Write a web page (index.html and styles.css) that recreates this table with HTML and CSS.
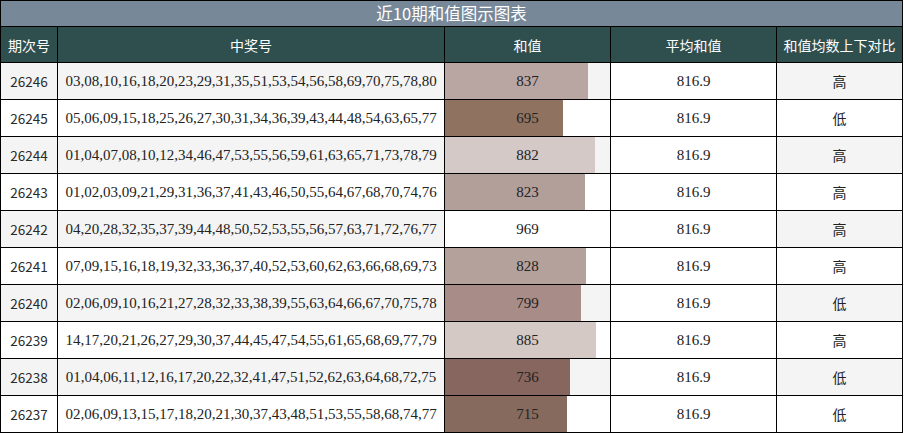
FILE: index.html
```html
<!DOCTYPE html>
<html lang="zh">
<head>
<meta charset="utf-8">
<title>近10期和值图示图表</title>
<link rel="stylesheet" href="styles.css">
</head>
<body>
<div class="chart">
  <div class="title">近10期和值图示图表</div>
  <div class="th">期次号</div>
  <div class="th">中奖号</div>
  <div class="th">和值</div>
  <div class="th">平均和值</div>
  <div class="th">和值均数上下对比</div>

  <div class="td period alt">26246</div>
  <div class="td nums alt">03,08,10,16,18,20,23,29,31,35,51,53,54,56,58,69,70,75,78,80</div>
  <div class="td sum alt"><div class="bar" style="width:86.38%;background:#b9a6a3"></div><span class="val">837</span></div>
  <div class="td avg">816.9</div>
  <div class="td cmp alt">高</div>

  <div class="td period">26245</div>
  <div class="td nums">05,06,09,15,18,25,26,27,30,31,34,36,39,43,44,48,54,63,65,77</div>
  <div class="td sum"><div class="bar" style="width:71.72%;background:#8f7360"></div><span class="val">695</span></div>
  <div class="td avg">816.9</div>
  <div class="td cmp">低</div>

  <div class="td period alt">26244</div>
  <div class="td nums alt">01,04,07,08,10,12,34,46,47,53,55,56,59,61,63,65,71,73,78,79</div>
  <div class="td sum alt"><div class="bar" style="width:91.02%;background:#d4c9c6"></div><span class="val">882</span></div>
  <div class="td avg">816.9</div>
  <div class="td cmp alt">高</div>

  <div class="td period">26243</div>
  <div class="td nums">01,02,03,09,21,29,31,36,37,41,43,46,50,55,64,67,68,70,74,76</div>
  <div class="td sum"><div class="bar" style="width:84.93%;background:#b39f9a"></div><span class="val">823</span></div>
  <div class="td avg">816.9</div>
  <div class="td cmp">高</div>

  <div class="td period alt">26242</div>
  <div class="td nums alt">04,20,28,32,35,37,39,44,48,50,52,53,55,56,57,63,71,72,76,77</div>
  <div class="td sum alt"><div class="bar" style="width:100%;background:#ffffff"></div><span class="val">969</span></div>
  <div class="td avg">816.9</div>
  <div class="td cmp alt">高</div>

  <div class="td period">26241</div>
  <div class="td nums">07,09,15,16,18,19,32,33,36,37,40,52,53,60,62,63,66,68,69,73</div>
  <div class="td sum"><div class="bar" style="width:85.45%;background:#b4a19b"></div><span class="val">828</span></div>
  <div class="td avg">816.9</div>
  <div class="td cmp">高</div>

  <div class="td period alt">26240</div>
  <div class="td nums alt">02,06,09,10,16,21,27,28,32,33,38,39,55,63,64,66,67,70,75,78</div>
  <div class="td sum alt"><div class="bar" style="width:82.46%;background:#a88c88"></div><span class="val">799</span></div>
  <div class="td avg">816.9</div>
  <div class="td cmp alt">低</div>

  <div class="td period">26239</div>
  <div class="td nums">14,17,20,21,26,27,29,30,37,44,45,47,54,55,61,65,68,69,77,79</div>
  <div class="td sum"><div class="bar" style="width:91.33%;background:#d5c9c6"></div><span class="val">885</span></div>
  <div class="td avg">816.9</div>
  <div class="td cmp">高</div>

  <div class="td period alt">26238</div>
  <div class="td nums alt">01,04,06,11,12,16,17,20,22,32,41,47,51,52,62,63,64,68,72,75</div>
  <div class="td sum alt"><div class="bar" style="width:75.95%;background:#86665f"></div><span class="val">736</span></div>
  <div class="td avg">816.9</div>
  <div class="td cmp alt">低</div>

  <div class="td period">26237</div>
  <div class="td nums">02,06,09,13,15,17,18,20,21,30,37,43,48,51,53,55,58,68,74,77</div>
  <div class="td sum"><div class="bar" style="width:73.79%;background:#866a5e"></div><span class="val">715</span></div>
  <div class="td avg">816.9</div>
  <div class="td cmp">低</div>
</div>
</body>
</html>
```

FILE: styles.css
```css
html, body {
  margin: 0;
  padding: 0;
  background: #ffffff;
}

.chart {
  width: 903px;
  display: grid;
  grid-template-columns: 56px 386px 165px 165px 125px;
  grid-template-rows: 25px 35px repeat(10, 36px);
  gap: 1px;
  padding: 1px;
  box-sizing: border-box;
  background: #000000;
  font-family: "Liberation Serif", "Noto Sans CJK SC", serif;
  color: #222222;
}

.title {
  grid-column: 1 / -1;
  background: #778899;
  color: #ffffff;
  font-family: "Noto Sans CJK SC", "Noto Sans", sans-serif;
  font-size: 16.5px;
  line-height: 25px;
  text-align: center;
}

.th {
  background: #2f4f4f;
  color: #ffffff;
  font-family: "Noto Sans CJK SC", "Noto Sans", sans-serif;
  font-size: 14px;
  display: flex;
  align-items: center;
  justify-content: center;
  white-space: nowrap;
}

.td {
  background: #ffffff;
  display: flex;
  align-items: center;
  justify-content: center;
  font-size: 15px;
  white-space: nowrap;
}

.td.alt {
  background: #f4f4f4;
}

.period {
  font-family: "Noto Sans CJK SC", "Liberation Sans", sans-serif;
  font-size: 13.5px;
  color: #2a2a2a;
}

.cmp {
  font-family: "Noto Sans CJK SC", sans-serif;
  font-size: 14px;
}

.sum {
  display: grid;
  grid-template-columns: 1fr;
  grid-template-rows: 1fr;
  justify-content: stretch;
  align-items: stretch;
}

.bar {
  grid-area: 1 / 1;
  height: 100%;
}

.val {
  grid-area: 1 / 1;
  display: flex;
  align-items: center;
  justify-content: center;
}
```
